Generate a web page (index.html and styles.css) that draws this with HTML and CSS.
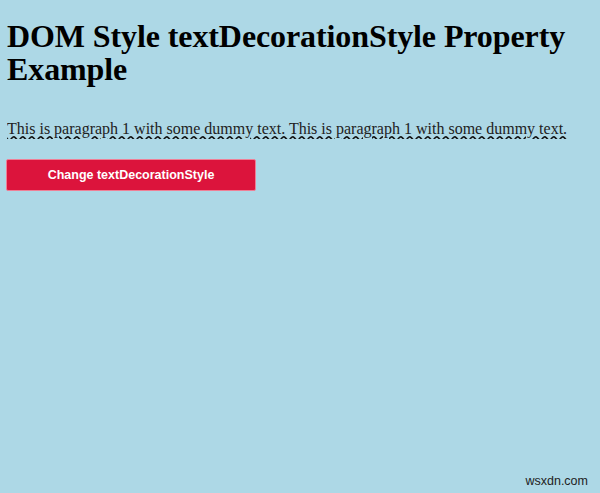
FILE: index.html
```html
<!DOCTYPE html>
<html lang="en">
<head>
    <meta charset="UTF-8">
    <title>DOM Style textDecorationStyle Property</title>
    <link rel="stylesheet" href="styles.css">
</head>
<body>
    <h1>DOM Style textDecorationStyle Property Example</h1>
    <p id="para" class="para">This is paragraph 1 with some dummy text. This is paragraph 1 with some dummy text.</p>
    <button class="btn" onclick="changeStyle()">Change textDecorationStyle</button>
    <div class="watermark">wsxdn.com</div>

    <script>
        function changeStyle() {
            document.getElementById('para').style.textDecorationStyle = 'wavy';
        }
    </script>
</body>
</html>
```

FILE: styles.css
```css
html, body {
    height: 100%;
}
body {
    margin: 0;
    padding: 0 7px;
    background-color: lightblue;
    font-family: "Liberation Serif", "Times New Roman", serif;
    color: #000;
    position: relative;
    overflow: hidden;
}
h1 {
    font-size: 32px;
    font-weight: bold;
    line-height: 33px;
    letter-spacing: -0.1px;
    margin: 0;
    padding-top: 20px;
}
.para {
    font-size: 16px;
    color: #222;
    line-height: 18px;
    height: 19px;
    margin: 34px 0 0;
    overflow: hidden;
    text-decoration: underline wavy #111;
}
.btn {
    display: block;
    width: 250px;
    height: 32px;
    margin: 20px 0 0 -1px;
    background: #dc143c;
    border: 1px solid #ef7f96;
    border-radius: 2px;
    color: #fff;
    font-family: "Liberation Sans", Arial, sans-serif;
    font-size: 12.5px;
    font-weight: bold;
}
.watermark {
    position: absolute;
    right: 12px;
    bottom: 5px;
    font-family: "Liberation Sans", Arial, sans-serif;
    font-size: 12.5px;
    color: #222;
}
```
